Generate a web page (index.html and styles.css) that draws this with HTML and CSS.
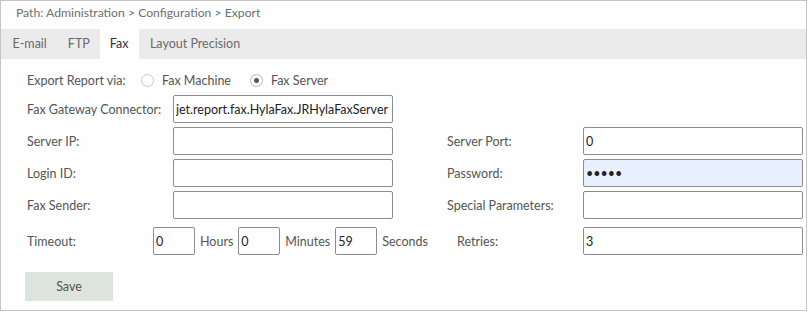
FILE: index.html
```html
<!DOCTYPE html>
<html>
<head>
<meta charset="utf-8">
<link rel="stylesheet" href="styles.css">
</head>
<body>
<div class="frame">
  <div class="path">Path: Administration &gt; Configuration &gt; Export</div>
  <div class="tabs">
    <span class="tab">E-mail</span>
    <span class="tab">FTP</span>
    <span class="tab active">Fax</span>
    <span class="tab">Layout Precision</span>
  </div>
  <div class="form">
    <div class="via">
      <span class="via-label">Export Report via:</span>
      <label class="radio"><input type="radio" name="via"><span>Fax Machine</span></label>
      <label class="radio"><input type="radio" name="via" checked><span>Fax Server</span></label>
    </div>
    <div class="grid">
      <span class="lbl">Fax Gateway Connector:</span>
      <input class="txt" type="text" value="jet.report.fax.HylaFax.JRHylaFaxServer">
      <span></span><span></span><span></span>

      <span class="lbl">Server IP:</span>
      <input class="txt" type="text" value="">
      <span></span>
      <span class="lbl">Server Port:</span>
      <input class="txt" type="text" value="0">

      <span class="lbl">Login ID:</span>
      <input class="txt" type="text" value="">
      <span></span>
      <span class="lbl">Password:</span>
      <input class="txt pw" type="password" value="12345">

      <span class="lbl">Fax Sender:</span>
      <input class="txt" type="text" value="">
      <span></span>
      <span class="lbl">Special Parameters:</span>
      <input class="txt" type="text" value="">

      <div class="timeout">
        <span class="tlbl">Timeout:</span>
        <input class="txt small" type="text" value="0">
        <span class="unit">Hours</span>
        <input class="txt small" type="text" value="0">
        <span class="unit">Minutes</span>
        <input class="txt small" type="text" value="59">
        <span class="unit">Seconds</span>
      </div>
      <span class="lbl retries">Retries:</span>
      <input class="txt" type="text" value="3">
    </div>
    <button class="save" type="button">Save</button>
  </div>
</div>
</body>
</html>
```

FILE: styles.css
```css
html, body {
  margin: 0;
  padding: 0;
  background: #ffffff;
}
body {
  font-family: Lato, "Open Sans", sans-serif;
  font-size: 12.5px;
  color: #555;
}
.frame {
  width: 805px;
  height: 309px;
  border: 1px solid #c4c4c4;
  background: #fdfefd;
}
.path {
  height: 28px;
  line-height: 24px;
  padding-left: 15px;
  color: #707070;
  font-size: 12.2px;
}
.tabs {
  display: flex;
  height: 30px;
  background: #ebebeb;
  padding-left: 1px;
}
.tab {
  padding: 0 10.5px;
  line-height: 30px;
  color: #6a6a6a;
}
.tab.active {
  background: #fdfefd;
  color: #333;
  padding: 0 11px 0 9.5px;
}
.form {
  padding: 8px 0 0 26px;
}
.via {
  display: flex;
  align-items: center;
  height: 26px;
  margin-bottom: 2px;
}
.via-label {
  width: 114px;
}
.radio {
  display: flex;
  align-items: center;
  margin-right: 19px;
}
.radio input {
  appearance: none;
  -webkit-appearance: none;
  width: 13px;
  height: 13px;
  margin: 0 8px 0 0;
  border: 1px solid #c8c8c8;
  border-radius: 50%;
  background: #fff;
  box-sizing: border-box;
  position: relative;
}
.radio input:checked {
  border-color: #b4b4b4;
}
.radio input:checked::after {
  content: "";
  position: absolute;
  left: 3px;
  top: 3px;
  width: 5px;
  height: 5px;
  border-radius: 50%;
  background: #555;
}
.grid {
  display: grid;
  grid-template-columns: 146px 220px 54px 136px 220px;
  grid-auto-rows: 28px;
  row-gap: 4px;
  align-items: center;
}
.lbl {
  white-space: nowrap;
}
.txt {
  box-sizing: border-box;
  height: 28px;
  width: 100%;
  margin: 0;
  border: 1px solid #8c8c8c;
  border-radius: 2px;
  padding: 0 2px;
  font-family: Lato, "Open Sans", sans-serif;
  font-size: 12.5px;
  color: #222;
  background: #fff;
  outline: none;
}
.txt.pw {
  background: #e9f0fd;
}
.timeout {
  grid-column: 1 / span 3;
  display: flex;
  align-items: center;
  gap: 5px;
  margin-top: 8px;
}
.tlbl {
  width: 121px;
}
.txt.small {
  width: 42px;
}
.retries, .timeout ~ .txt {
  margin-top: 8px;
}
.retries {
  padding-left: 10px;
}
.save {
  margin: 21px 0 0 -2px;
  width: 88px;
  height: 29px;
  border: none;
  background: #dde4dd;
  color: #555;
  font-family: Lato, "Open Sans", sans-serif;
  font-size: 12.5px;
  padding: 0;
}
```
